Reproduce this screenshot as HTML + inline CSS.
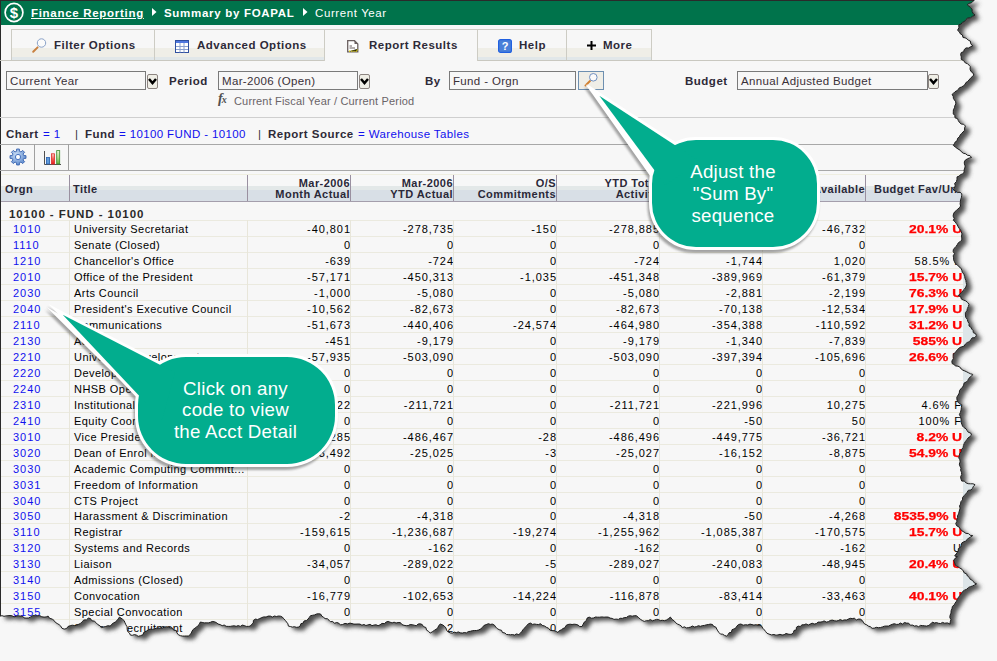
<!DOCTYPE html>
<html><head><meta charset="utf-8">
<style>
html,body{margin:0;padding:0;}
body{width:997px;height:661px;overflow:hidden;background:#f7f7f7;position:relative;font-family:"Liberation Sans",sans-serif;font-size:11px;color:#000;}
.abs{position:absolute;}
#paper{position:absolute;left:0;top:0;width:997px;height:661px;background:#f7f7f7;overflow:hidden;}
.t{position:absolute;white-space:nowrap;line-height:13px;}
.hdr{position:absolute;left:0;top:0;width:997px;height:25px;background:#00734b;border-top:1px solid #2a2a2a;box-sizing:border-box;}
.hl{color:#fff;font-weight:bold;font-size:11.5px;letter-spacing:0.7px;}
.tab{position:absolute;top:29px;height:31px;box-sizing:border-box;border:1px solid #cdccc4;border-bottom:none;background:linear-gradient(#f7f7f7 0,#f7f7f7 18px,#efeee7 18px,#efeee7 27px,#e1e7e9 27px);}
.tab .t{top:9px;color:#2e2a38;font-weight:bold;font-size:11.5px;letter-spacing:0.5px;}
.sel{position:absolute;top:71px;height:19px;box-sizing:border-box;border:1px solid #7a7a7a;background:#f7f7f7;}
.sel .t{left:3px;top:3px;color:#3a3038;font-size:11.5px;letter-spacing:0.35px;}
.dd{position:absolute;top:74px;width:11px;height:15px;box-sizing:border-box;border:1px solid #8c8480;border-radius:2px;background:#efeee6;}
.lbl{position:absolute;top:75px;font-weight:bold;color:#2e2a38;font-size:11.5px;white-space:nowrap;line-height:13px;letter-spacing:0.5px;}
.hline{position:absolute;left:0;height:1px;background:#c8c8c8;}
.cr{position:absolute;white-space:nowrap;line-height:16px;height:16px;letter-spacing:0.55px;}
.num{letter-spacing:0.95px;}
.num{text-align:right;}
.lnk{color:#1010ee;}
.num.red{color:#ff0000;font-weight:bold;letter-spacing:0;transform:scaleX(1.26);transform-origin:100% 50%;-webkit-text-stroke:0.25px #ff0000;}
.th{position:absolute;white-space:nowrap;line-height:12px;font-weight:bold;color:#2a2838;text-align:right;letter-spacing:0.45px;}
.callout text{font-family:"Liberation Sans",sans-serif;}
</style></head><body>

<svg class="abs" style="left:0;top:0" width="997" height="661"><defs><filter id="sh" x="-5%" y="-5%" width="110%" height="110%"><feGaussianBlur stdDeviation="2.1"/></filter></defs>
<polygon points="5.0,3.5 979.5,3.5 977.8,5.0 976.2,6.4 973.9,6.9 972.2,8.3 975.3,10.8 977.0,12.7 977.2,15.2 978.3,17.4 980.0,18.5 977.7,19.7 975.5,21.2 972.8,21.5 971.0,22.8 969.7,24.9 967.5,25.7 966.1,27.6 963.8,28.3 963.9,31.2 962.6,33.8 964.3,35.3 965.4,37.4 967.4,38.5 968.0,41.0 970.1,41.3 971.9,42.3 973.4,43.8 975.3,44.5 975.8,47.3 977.7,49.5 975.5,50.3 973.5,51.5 971.0,51.4 969.2,53.1 968.7,55.2 966.3,56.0 965.6,58.0 966.3,60.4 966.2,62.8 968.7,64.2 970.4,66.5 972.4,67.1 973.9,68.6 975.3,70.1 975.0,72.6 975.9,74.9 977.8,76.3 978.9,78.5 977.2,80.1 975.5,81.7 974.0,83.5 972.6,85.0 970.9,86.1 969.9,88.1 968.3,89.4 966.6,90.5 964.5,91.2 963.3,92.8 961.9,94.3 960.0,95.2 958.6,96.7 957.0,98.0 958.2,99.7 958.4,101.9 959.5,103.6 960.7,105.3 960.8,107.4 959.8,109.3 959.5,111.3 958.4,113.2 958.3,115.3 958.3,117.4 959.8,118.9 960.0,121.3 962.5,122.1 963.3,124.1 964.4,125.9 966.2,127.5 968.7,127.8 970.4,129.5 969.6,131.5 969.6,133.8 968.0,135.5 966.5,137.0 965.2,138.6 964.3,140.4 962.6,141.8 962.2,144.1 960.4,145.3 959.4,147.1 958.3,148.9 960.6,150.8 963.0,152.5 965.0,153.6 966.5,155.4 968.4,156.8 970.7,157.3 972.5,158.8 975.0,159.1 976.5,161.0 974.3,161.5 972.3,162.4 970.4,163.5 969.3,165.4 969.4,167.4 970.2,169.5 969.8,171.5 969.1,173.5 969.2,175.5 967.9,177.4 965.6,178.0 964.1,179.7 962.0,180.4 962.0,182.8 961.5,185.0 959.7,186.8 960.2,189.3 959.4,191.4 958.3,193.5 960.5,194.3 962.3,196.0 965.0,195.7 966.8,197.3 966.7,199.3 966.3,201.4 965.5,203.3 965.4,205.4 965.1,207.4 965.6,209.5 964.4,211.3 962.7,212.6 961.2,214.2 959.5,215.5 958.5,217.5 958.1,219.6 959.2,221.9 958.3,223.9 960.0,225.1 961.1,226.8 962.3,228.4 963.2,230.3 964.3,232.0 965.6,233.5 966.3,235.4 967.0,237.4 966.5,239.5 966.8,241.5 966.8,243.5 965.3,245.0 963.4,246.2 962.3,248.1 961.1,249.9 959.6,251.4 958.3,253.2 958.2,255.2 959.5,257.2 958.2,259.3 958.6,261.3 958.6,263.3 959.5,265.3 960.6,267.3 962.6,268.6 964.0,270.3 965.9,271.6 966.8,273.8 967.3,275.9 968.9,277.7 969.6,279.8 970.0,281.9 970.8,284.0 971.2,286.1 971.6,288.3 970.8,290.6 969.5,292.5 967.9,294.1 966.6,296.0 964.8,297.5 963.2,299.2 965.5,299.9 966.4,302.6 968.5,303.6 970.8,304.4 972.5,305.9 974.0,307.7 973.4,309.9 972.4,312.0 971.9,314.3 970.4,316.1 970.4,318.5 970.7,320.8 972.3,322.8 972.8,325.0 974.1,327.1 974.0,329.5 975.8,330.7 976.7,332.5 978.0,334.0 978.4,336.3 980.6,337.1 981.3,339.1 980.0,341.2 977.2,341.3 975.8,343.3 974.4,345.2 972.2,346.0 970.4,347.5 969.2,349.6 966.9,350.3 964.7,351.0 963.1,352.6 961.5,354.2 960.3,356.2 958.3,357.3 958.2,359.8 958.3,362.2 956.9,364.5 957.1,367.0 958.9,368.0 960.6,369.4 962.9,369.7 964.8,370.5 966.2,372.5 967.9,373.7 969.9,374.5 971.8,375.4 973.7,376.4 975.6,377.3 977.7,377.9 976.6,379.7 974.8,380.7 973.6,382.3 972.6,384.2 971.2,385.6 969.2,386.4 968.6,388.6 967.6,390.6 965.9,392.3 964.5,394.1 964.3,396.5 963.2,398.5 961.8,400.8 962.0,403.5 963.0,405.7 964.6,407.3 966.8,408.3 966.4,410.8 966.1,413.3 965.5,415.7 964.4,418.0 965.5,420.3 966.1,422.7 966.0,425.3 966.8,427.7 967.6,429.7 969.1,431.2 971.0,432.3 972.1,434.1 973.3,435.8 975.7,436.5 976.5,438.6 974.8,440.1 973.0,441.5 971.7,443.4 970.3,445.1 969.2,447.1 968.4,449.1 968.1,451.3 966.3,453.0 966.3,455.3 964.7,457.0 964.4,459.2 963.7,461.3 964.9,463.3 965.1,465.4 964.3,467.6 964.9,469.6 966.0,471.6 965.6,473.7 966.5,475.8 966.7,478.0 965.6,480.3 966.0,482.5 966.8,484.6 969.2,484.6 971.1,486.4 973.2,487.2 975.6,487.3 978.0,487.3 980.1,488.2 978.5,489.7 977.5,491.8 976.0,493.5 973.3,493.8 972.1,495.8 970.7,497.5 969.2,499.1 967.6,500.9 967.5,503.4 965.9,505.2 965.6,507.6 964.5,509.4 965.1,511.6 964.6,513.5 964.0,515.5 963.6,517.4 962.5,519.2 962.6,521.3 961.8,523.2 961.8,525.2 960.7,527.0 961.7,529.3 964.0,530.5 965.3,532.4 966.8,534.3 968.9,535.4 970.9,536.9 973.4,537.0 975.2,538.8 977.7,539.1 975.9,540.3 974.0,541.5 972.2,542.7 970.9,544.7 968.7,545.3 966.8,546.4 966.3,548.7 965.6,550.8 963.3,552.2 963.3,554.7 961.8,556.5 960.7,558.5 960.6,558.1 959.7,559.5 962.4,560.2 960.3,561.6 958.8,563.6 959.6,566.4 960.6,569.1 962.9,570.1 964.9,571.6 967.0,572.8 968.3,574.5 969.3,576.5 971.6,577.4 972.4,579.5 974.2,580.8 975.2,582.8 977.6,584.0 979.2,586.3 981.6,587.4 979.7,588.4 977.7,589.4 975.6,590.1 973.5,590.9 971.9,592.7 969.8,593.5 968.0,594.7 966.6,596.7 965.2,598.8 963.5,600.7 962.4,602.9 961.4,604.8 960.2,606.5 959.2,608.4 957.4,609.9 957.0,612.1 956.1,614.3 956.0,616.6 955.1,618.7 954.8,620.9 955.9,623.2 955.2,625.4 955.1,627.6 952.5,626.4 949.6,626.7 947.6,625.9 945.5,627.0 943.5,626.8 941.5,626.1 939.4,626.5 937.5,625.6 935.8,627.3 933.9,628.9 931.5,629.6 929.5,629.3 927.5,629.1 925.5,628.9 923.5,630.2 921.5,629.2 919.5,629.6 917.6,628.6 915.3,628.7 913.7,626.7 911.5,626.6 909.4,626.0 907.5,627.6 905.4,626.5 903.5,627.8 901.4,627.9 899.3,627.2 897.3,627.8 895.4,628.6 893.5,629.6 891.4,629.5 889.4,629.7 887.5,630.4 885.5,631.0 883.5,631.2 881.3,630.8 879.4,631.6 877.1,631.8 875.4,630.2 873.4,629.6 871.7,628.3 869.6,627.5 868.3,625.6 867.1,623.8 865.3,622.6 863.3,622.6 861.3,623.4 859.3,621.7 857.3,622.1 855.3,621.8 853.3,622.6 851.4,623.5 849.3,623.4 847.4,624.1 845.2,623.0 843.3,624.1 841.3,624.5 839.3,624.2 837.2,623.6 835.2,624.0 833.3,625.2 831.3,625.6 829.1,624.4 827.2,625.3 825.2,625.6 823.1,625.6 821.3,627.1 819.3,627.5 817.1,626.7 815.2,627.6 813.3,628.5 811.0,627.4 809.1,628.3 807.0,628.3 805.2,630.0 803.1,629.6 801.4,630.8 801.3,633.3 799.0,634.0 798.4,636.0 797.1,637.6 795.1,637.9 793.1,637.6 791.0,637.0 789.1,638.2 787.1,638.5 785.0,637.8 783.0,638.4 781.0,638.7 779.0,638.0 776.5,638.4 774.0,637.6 771.9,636.7 770.6,635.0 769.3,633.3 767.8,631.8 766.8,629.8 765.0,628.6 763.0,628.8 761.0,628.2 758.9,628.6 757.0,628.1 755.0,627.6 752.8,628.5 750.5,628.2 748.2,628.7 745.9,627.5 743.6,628.0 742.0,629.4 741.0,631.3 739.1,632.4 737.0,633.2 736.5,635.8 734.1,636.3 733.1,638.2 731.5,639.6 729.5,638.9 727.7,637.7 725.5,637.6 724.0,636.1 722.8,634.4 721.8,632.6 720.8,630.6 718.6,629.8 717.5,628.0 715.4,627.6 713.4,628.0 711.4,628.3 709.5,628.9 707.5,629.1 705.5,629.8 703.4,629.2 701.5,630.1 699.5,630.5 697.3,629.5 695.5,630.6 693.5,631.1 691.5,631.4 689.3,630.3 687.4,631.2 686.2,629.4 684.4,628.3 682.4,627.5 680.7,626.3 679.4,624.6 677.1,622.9 675.4,620.6 673.4,622.2 671.3,623.6 669.3,624.2 667.3,623.8 665.3,624.1 663.3,622.9 661.3,622.9 659.3,623.7 657.3,624.3 655.3,623.0 653.3,624.2 651.3,624.2 649.3,624.9 647.3,624.0 645.2,622.6 643.3,620.8 641.3,619.2 639.3,619.2 637.2,619.7 635.2,619.2 633.2,619.7 631.4,621.0 629.3,621.1 627.4,621.9 625.2,621.8 623.4,622.9 621.2,622.6 619.0,622.9 617.1,621.9 615.1,621.6 613.2,620.6 611.1,620.5 609.0,620.7 606.8,620.4 604.7,620.7 602.6,620.7 600.5,620.5 598.4,621.5 596.3,621.7 594.2,620.6 592.1,621.6 591.4,624.0 589.3,625.6 588.1,627.8 587.1,630.0 584.8,630.1 583.1,628.6 581.1,627.9 579.1,627.7 577.1,628.0 575.1,627.7 573.1,628.0 571.1,628.9 570.1,631.2 568.0,632.0 566.4,633.3 564.3,634.2 563.0,636.0 561.2,634.9 559.2,634.2 557.0,634.1 555.0,633.6 553.5,631.7 551.4,630.8 549.6,629.5 547.2,628.9 545.6,627.2 543.6,628.0 541.6,627.9 539.5,627.5 537.5,627.9 535.5,626.6 533.5,627.2 532.1,628.7 530.7,630.2 529.3,631.8 527.9,633.3 526.8,635.0 525.5,636.6 523.8,638.1 521.3,637.4 519.5,638.6 517.5,638.0 515.5,638.3 513.5,638.1 511.5,638.0 509.9,636.5 507.5,636.0 506.5,633.8 504.2,633.2 502.2,632.1 500.7,630.5 499.4,628.6 497.4,627.6 495.3,627.9 493.4,627.2 491.2,628.1 488.9,629.0 487.4,631.0 485.5,632.5 483.4,633.6 481.4,634.0 479.3,634.0 477.3,634.2 475.3,634.8 473.3,635.1 471.4,636.4 469.3,636.0 467.3,636.6 465.3,636.3 463.3,635.4 461.3,636.2 459.3,635.6 457.3,636.6 455.3,636.4 453.3,635.6 451.6,633.8 450.9,631.4 449.3,629.6 447.5,628.3 445.3,627.6 443.7,629.1 442.9,631.2 441.3,632.6 439.3,633.9 437.3,635.3 435.2,636.6 433.6,634.9 431.5,633.6 430.9,631.0 428.4,630.1 427.2,628.0 425.1,627.3 423.1,627.5 421.3,629.3 419.2,628.7 417.2,628.2 415.1,628.1 413.2,629.1 411.2,629.2 409.0,628.8 407.0,628.1 405.4,626.1 403.1,626.0 401.1,626.5 399.1,625.7 397.1,626.4 395.1,625.7 393.1,624.9 391.1,625.6 389.4,627.1 386.9,626.9 385.1,628.3 383.1,629.2 381.1,628.3 379.1,628.5 377.0,629.2 375.1,627.8 373.0,628.4 370.9,629.0 369.0,628.0 366.9,628.7 365.0,627.6 363.0,627.5 361.0,627.6 358.9,627.6 357.0,627.1 355.0,626.6 352.6,627.4 350.0,626.9 347.6,628.0 345.4,628.4 343.7,626.6 341.7,626.0 339.4,626.8 337.7,624.9 335.5,625.2 334.0,623.7 332.5,622.3 330.1,622.1 328.5,620.8 326.8,619.6 325.7,617.6 323.5,617.2 321.5,617.5 319.6,618.4 317.5,618.8 315.5,619.2 314.3,620.9 313.0,622.6 311.5,624.0 309.0,624.5 308.2,626.6 305.9,627.2 305.2,629.5 303.4,630.6 301.4,630.8 299.4,630.2 297.3,630.6 295.4,630.0 293.4,629.6 292.9,627.3 291.6,625.6 290.3,623.9 288.8,622.3 287.4,620.6 285.5,619.7 283.5,619.5 281.4,620.0 279.4,619.5 277.3,620.6 275.4,619.6 273.2,619.6 271.1,620.5 268.8,620.4 266.7,621.1 264.7,622.1 262.6,623.0 260.3,622.6 258.4,623.9 258.3,626.5 256.6,627.9 255.3,629.6 253.3,629.9 251.3,629.9 249.3,629.1 247.3,628.6 245.3,629.9 243.3,629.1 241.2,629.8 239.2,629.3 237.2,629.5 235.2,629.9 233.2,629.9 231.2,629.8 229.2,628.5 227.2,629.2 225.2,628.1 223.0,627.5 221.2,626.0 219.2,625.2 217.2,625.0 215.2,625.9 213.2,626.4 211.2,626.3 209.2,626.4 207.2,625.9 205.2,625.6 204.5,627.6 203.0,629.0 201.7,630.5 199.9,631.7 198.2,632.9 197.1,634.6 196.3,636.6 195.0,638.1 193.6,639.6 191.6,639.5 189.5,639.6 187.5,639.6 185.5,639.2 183.4,638.3 182.0,636.5 181.3,634.0 178.6,633.6 177.5,631.6 175.5,631.3 173.5,630.9 171.6,630.2 169.5,630.6 167.6,631.4 165.6,631.5 163.6,631.8 161.5,631.6 159.5,632.4 157.5,632.9 155.2,632.6 153.2,633.4 151.4,634.6 149.0,635.6 147.9,638.3 145.4,639.2 143.3,639.9 141.4,638.6 139.4,638.1 137.4,638.8 135.4,638.6 134.5,636.5 132.6,635.0 132.2,632.7 132.1,630.3 130.9,628.3 130.0,626.3 129.2,624.2 127.4,622.6 124.4,620.6 123.2,622.4 121.9,624.1 120.3,625.5 118.3,626.6 116.6,627.9 115.3,629.6 112.9,629.2 110.7,630.0 108.5,630.5 106.3,631.2 104.9,629.2 102.7,628.0 101.1,626.2 99.3,624.6 96.9,624.3 95.5,622.1 93.3,621.6 91.5,623.3 88.9,623.5 87.1,625.2 85.4,627.0 83.2,628.0 81.3,629.0 79.3,629.0 77.2,628.7 75.2,629.2 73.0,630.0 71.5,632.1 69.2,632.6 67.0,631.8 65.8,629.7 64.2,628.2 62.2,627.0 60.3,625.8 59.0,623.9 57.2,622.6 54.6,621.8 53.1,619.6 51.2,620.4 49.1,620.6 46.8,620.3 44.7,619.1 42.4,619.3 40.1,619.2 37.7,619.1 35.6,620.4 33.5,621.5 31.1,621.6 29.0,621.4 27.4,619.5 25.1,619.6 23.1,619.2 21.1,619.8 19.0,620.3 17.0,619.3 15.0,619.0 13.0,619.2 11.0,619.4 9.0,619.8 7.0,619.2 5.0,619.6" fill="#505050" filter="url(#sh)"/></svg>
<div id="paper" style="clip-path:polygon(0.0px 0.0px,974.5px 0.0px,972.8px 1.5px,971.2px 2.9px,968.9px 3.4px,967.2px 4.8px,970.3px 7.3px,972.0px 9.2px,972.2px 11.7px,973.3px 13.9px,975.0px 15.0px,972.7px 16.2px,970.5px 17.7px,967.8px 18.0px,966.0px 19.3px,964.7px 21.4px,962.5px 22.2px,961.1px 24.1px,958.8px 24.8px,958.9px 27.7px,957.6px 30.3px,959.3px 31.8px,960.4px 33.9px,962.4px 35.0px,963.0px 37.5px,965.1px 37.8px,966.9px 38.8px,968.4px 40.3px,970.3px 41.0px,970.8px 43.8px,972.7px 46.0px,970.5px 46.8px,968.5px 48.0px,966.0px 47.9px,964.2px 49.6px,963.7px 51.7px,961.3px 52.5px,960.6px 54.5px,961.3px 56.9px,961.2px 59.3px,963.7px 60.7px,965.4px 63.0px,967.4px 63.6px,968.9px 65.1px,970.3px 66.6px,970.0px 69.1px,970.9px 71.4px,972.8px 72.8px,973.9px 75.0px,972.2px 76.6px,970.5px 78.2px,969.0px 80.0px,967.6px 81.5px,965.9px 82.6px,964.9px 84.6px,963.3px 85.9px,961.6px 87.0px,959.5px 87.7px,958.3px 89.3px,956.9px 90.8px,955.0px 91.7px,953.6px 93.2px,952.0px 94.5px,953.2px 96.2px,953.4px 98.4px,954.5px 100.1px,955.7px 101.8px,955.8px 103.9px,954.8px 105.8px,954.5px 107.8px,953.4px 109.7px,953.3px 111.8px,953.3px 113.9px,954.8px 115.4px,955.0px 117.8px,957.5px 118.6px,958.3px 120.6px,959.4px 122.4px,961.2px 124.0px,963.7px 124.3px,965.4px 126.0px,964.6px 128.0px,964.6px 130.3px,963.0px 132.0px,961.5px 133.5px,960.2px 135.1px,959.3px 136.9px,957.6px 138.3px,957.2px 140.6px,955.4px 141.8px,954.4px 143.6px,953.3px 145.4px,955.6px 147.3px,958.0px 149.0px,960.0px 150.1px,961.5px 151.9px,963.4px 153.3px,965.7px 153.8px,967.5px 155.3px,970.0px 155.6px,971.5px 157.5px,969.3px 158.0px,967.3px 158.9px,965.4px 160.0px,964.3px 161.9px,964.4px 163.9px,965.2px 166.0px,964.8px 168.0px,964.1px 170.0px,964.2px 172.0px,962.9px 173.9px,960.6px 174.5px,959.1px 176.2px,957.0px 176.9px,957.0px 179.3px,956.5px 181.5px,954.7px 183.3px,955.2px 185.8px,954.4px 187.9px,953.3px 190.0px,955.5px 190.8px,957.3px 192.5px,960.0px 192.2px,961.8px 193.8px,961.7px 195.8px,961.3px 197.9px,960.5px 199.8px,960.4px 201.9px,960.1px 203.9px,960.6px 206.0px,959.4px 207.8px,957.7px 209.1px,956.2px 210.7px,954.5px 212.0px,953.5px 214.0px,953.1px 216.1px,954.2px 218.4px,953.3px 220.4px,955.0px 221.6px,956.1px 223.3px,957.3px 224.9px,958.2px 226.8px,959.3px 228.5px,960.6px 230.0px,961.3px 231.9px,962.0px 233.9px,961.5px 236.0px,961.8px 238.0px,961.8px 240.0px,960.3px 241.5px,958.4px 242.7px,957.3px 244.6px,956.1px 246.4px,954.6px 247.9px,953.3px 249.7px,953.2px 251.7px,954.5px 253.7px,953.2px 255.8px,953.6px 257.8px,953.6px 259.8px,954.5px 261.8px,955.6px 263.8px,957.6px 265.1px,959.0px 266.8px,960.9px 268.1px,961.8px 270.3px,962.3px 272.4px,963.9px 274.2px,964.6px 276.3px,965.0px 278.4px,965.8px 280.5px,966.2px 282.6px,966.6px 284.8px,965.8px 287.1px,964.5px 289.0px,962.9px 290.6px,961.6px 292.5px,959.8px 294.0px,958.2px 295.7px,960.5px 296.4px,961.4px 299.1px,963.5px 300.1px,965.8px 300.9px,967.5px 302.4px,969.0px 304.2px,968.4px 306.4px,967.4px 308.5px,966.9px 310.8px,965.4px 312.6px,965.4px 315.0px,965.7px 317.3px,967.3px 319.3px,967.8px 321.5px,969.1px 323.6px,969.0px 326.0px,970.8px 327.2px,971.7px 329.0px,973.0px 330.5px,973.4px 332.8px,975.6px 333.6px,976.3px 335.6px,975.0px 337.7px,972.2px 337.8px,970.8px 339.8px,969.4px 341.7px,967.2px 342.5px,965.4px 344.0px,964.2px 346.1px,961.9px 346.8px,959.7px 347.5px,958.1px 349.1px,956.5px 350.7px,955.3px 352.7px,953.3px 353.8px,953.2px 356.3px,953.3px 358.7px,951.9px 361.0px,952.1px 363.5px,953.9px 364.5px,955.6px 365.9px,957.9px 366.2px,959.8px 367.0px,961.2px 369.0px,962.9px 370.2px,964.9px 371.0px,966.8px 371.9px,968.7px 372.9px,970.6px 373.8px,972.7px 374.4px,971.6px 376.2px,969.8px 377.2px,968.6px 378.8px,967.6px 380.7px,966.2px 382.1px,964.2px 382.9px,963.6px 385.1px,962.6px 387.1px,960.9px 388.8px,959.5px 390.6px,959.3px 393.0px,958.2px 395.0px,956.8px 397.3px,957.0px 400.0px,958.0px 402.2px,959.6px 403.8px,961.8px 404.8px,961.4px 407.3px,961.1px 409.8px,960.5px 412.2px,959.4px 414.5px,960.5px 416.8px,961.1px 419.2px,961.0px 421.8px,961.8px 424.2px,962.6px 426.2px,964.1px 427.7px,966.0px 428.8px,967.1px 430.6px,968.3px 432.3px,970.7px 433.0px,971.5px 435.1px,969.8px 436.6px,968.0px 438.0px,966.7px 439.9px,965.3px 441.6px,964.2px 443.6px,963.4px 445.6px,963.1px 447.8px,961.3px 449.5px,961.3px 451.8px,959.7px 453.5px,959.4px 455.7px,958.7px 457.8px,959.9px 459.8px,960.1px 461.9px,959.3px 464.1px,959.9px 466.1px,961.0px 468.1px,960.6px 470.2px,961.5px 472.3px,961.7px 474.5px,960.6px 476.8px,961.0px 479.0px,961.8px 481.1px,964.2px 481.1px,966.1px 482.9px,968.2px 483.7px,970.6px 483.8px,973.0px 483.8px,975.1px 484.7px,973.5px 486.2px,972.5px 488.3px,971.0px 490.0px,968.3px 490.3px,967.1px 492.3px,965.7px 494.0px,964.2px 495.6px,962.6px 497.4px,962.5px 499.9px,960.9px 501.7px,960.6px 504.1px,959.5px 505.9px,960.1px 508.1px,959.6px 510.0px,959.0px 512.0px,958.6px 513.9px,957.5px 515.7px,957.6px 517.8px,956.8px 519.7px,956.8px 521.7px,955.7px 523.5px,956.7px 525.8px,959.0px 527.0px,960.3px 528.9px,961.8px 530.8px,963.9px 531.9px,965.9px 533.4px,968.4px 533.5px,970.2px 535.3px,972.7px 535.6px,970.9px 536.8px,969.0px 538.0px,967.2px 539.2px,965.9px 541.2px,963.7px 541.8px,961.8px 542.9px,961.3px 545.2px,960.6px 547.3px,958.3px 548.7px,958.3px 551.2px,956.8px 553.0px,955.7px 555.0px,955.6px 554.6px,954.7px 556.0px,957.4px 556.7px,955.3px 558.1px,953.8px 560.1px,954.6px 562.9px,955.6px 565.6px,957.9px 566.6px,959.9px 568.1px,962.0px 569.3px,963.3px 571.0px,964.3px 573.0px,966.6px 573.9px,967.4px 576.0px,969.2px 577.3px,970.2px 579.3px,972.6px 580.5px,974.2px 582.8px,976.6px 583.9px,974.7px 584.9px,972.7px 585.9px,970.6px 586.6px,968.5px 587.4px,966.9px 589.2px,964.8px 590.0px,963.0px 591.2px,961.6px 593.2px,960.2px 595.3px,958.5px 597.2px,957.4px 599.4px,956.4px 601.3px,955.2px 603.0px,954.2px 604.9px,952.4px 606.4px,952.0px 608.6px,951.1px 610.8px,951.0px 613.1px,950.1px 615.2px,949.8px 617.4px,950.9px 619.7px,950.2px 621.9px,950.1px 624.1px,947.5px 622.9px,944.6px 623.2px,942.6px 622.4px,940.5px 623.5px,938.5px 623.3px,936.5px 622.6px,934.4px 623.0px,932.5px 622.1px,930.8px 623.8px,928.9px 625.4px,926.5px 626.1px,924.5px 625.8px,922.5px 625.6px,920.5px 625.4px,918.5px 626.7px,916.5px 625.7px,914.5px 626.1px,912.6px 625.1px,910.3px 625.2px,908.7px 623.2px,906.5px 623.1px,904.4px 622.5px,902.5px 624.1px,900.4px 623.0px,898.5px 624.3px,896.4px 624.4px,894.3px 623.7px,892.3px 624.3px,890.4px 625.1px,888.5px 626.1px,886.4px 626.0px,884.4px 626.2px,882.5px 626.9px,880.5px 627.5px,878.5px 627.7px,876.3px 627.3px,874.4px 628.1px,872.1px 628.3px,870.4px 626.7px,868.4px 626.1px,866.7px 624.8px,864.6px 624.0px,863.3px 622.1px,862.1px 620.3px,860.3px 619.1px,858.3px 619.1px,856.3px 619.9px,854.3px 618.2px,852.3px 618.6px,850.3px 618.3px,848.3px 619.1px,846.4px 620.0px,844.3px 619.9px,842.4px 620.6px,840.2px 619.5px,838.3px 620.6px,836.3px 621.0px,834.3px 620.7px,832.2px 620.1px,830.2px 620.5px,828.3px 621.7px,826.3px 622.1px,824.1px 620.9px,822.2px 621.8px,820.2px 622.1px,818.1px 622.1px,816.3px 623.6px,814.3px 624.0px,812.1px 623.2px,810.2px 624.1px,808.3px 625.0px,806.0px 623.9px,804.1px 624.8px,802.0px 624.8px,800.2px 626.5px,798.1px 626.1px,796.4px 627.3px,796.3px 629.8px,794.0px 630.5px,793.4px 632.5px,792.1px 634.1px,790.1px 634.4px,788.1px 634.1px,786.0px 633.5px,784.1px 634.7px,782.1px 635.0px,780.0px 634.3px,778.0px 634.9px,776.0px 635.2px,774.0px 634.5px,771.5px 634.9px,769.0px 634.1px,766.9px 633.2px,765.6px 631.5px,764.3px 629.8px,762.8px 628.3px,761.8px 626.3px,760.0px 625.1px,758.0px 625.3px,756.0px 624.7px,753.9px 625.1px,752.0px 624.6px,750.0px 624.1px,747.8px 625.0px,745.5px 624.7px,743.2px 625.2px,740.9px 624.0px,738.6px 624.5px,737.0px 625.9px,736.0px 627.8px,734.1px 628.9px,732.0px 629.7px,731.5px 632.3px,729.1px 632.8px,728.1px 634.7px,726.5px 636.1px,724.5px 635.4px,722.7px 634.2px,720.5px 634.1px,719.0px 632.6px,717.8px 630.9px,716.8px 629.1px,715.8px 627.1px,713.6px 626.3px,712.5px 624.5px,710.4px 624.1px,708.4px 624.5px,706.4px 624.8px,704.5px 625.4px,702.5px 625.6px,700.5px 626.3px,698.4px 625.7px,696.5px 626.6px,694.5px 627.0px,692.3px 626.0px,690.5px 627.1px,688.5px 627.6px,686.5px 627.9px,684.3px 626.8px,682.4px 627.7px,681.2px 625.9px,679.4px 624.8px,677.4px 624.0px,675.7px 622.8px,674.4px 621.1px,672.1px 619.4px,670.4px 617.1px,668.4px 618.7px,666.3px 620.1px,664.3px 620.7px,662.3px 620.3px,660.3px 620.6px,658.3px 619.4px,656.3px 619.4px,654.3px 620.2px,652.3px 620.8px,650.3px 619.5px,648.3px 620.7px,646.3px 620.7px,644.3px 621.4px,642.3px 620.5px,640.2px 619.1px,638.3px 617.3px,636.3px 615.7px,634.3px 615.7px,632.2px 616.2px,630.2px 615.7px,628.2px 616.2px,626.4px 617.5px,624.3px 617.6px,622.4px 618.4px,620.2px 618.3px,618.4px 619.4px,616.2px 619.1px,614.0px 619.4px,612.1px 618.4px,610.1px 618.1px,608.2px 617.1px,606.1px 617.0px,604.0px 617.2px,601.8px 616.9px,599.7px 617.2px,597.6px 617.2px,595.5px 617.0px,593.4px 618.0px,591.3px 618.2px,589.2px 617.1px,587.1px 618.1px,586.4px 620.5px,584.3px 622.1px,583.1px 624.3px,582.1px 626.5px,579.8px 626.6px,578.1px 625.1px,576.1px 624.4px,574.1px 624.2px,572.1px 624.5px,570.1px 624.2px,568.1px 624.5px,566.1px 625.4px,565.1px 627.7px,563.0px 628.5px,561.4px 629.8px,559.3px 630.7px,558.0px 632.5px,556.2px 631.4px,554.2px 630.7px,552.0px 630.6px,550.0px 630.1px,548.5px 628.2px,546.4px 627.3px,544.6px 626.0px,542.2px 625.4px,540.6px 623.7px,538.6px 624.5px,536.6px 624.4px,534.5px 624.0px,532.5px 624.4px,530.5px 623.1px,528.5px 623.7px,527.1px 625.2px,525.7px 626.7px,524.3px 628.3px,522.9px 629.8px,521.8px 631.5px,520.5px 633.1px,518.8px 634.6px,516.3px 633.9px,514.5px 635.1px,512.5px 634.5px,510.5px 634.8px,508.5px 634.6px,506.5px 634.5px,504.9px 633.0px,502.5px 632.5px,501.5px 630.3px,499.2px 629.7px,497.2px 628.6px,495.7px 627.0px,494.4px 625.1px,492.4px 624.1px,490.3px 624.4px,488.4px 623.7px,486.2px 624.6px,483.9px 625.5px,482.4px 627.5px,480.5px 629.0px,478.4px 630.1px,476.4px 630.5px,474.3px 630.5px,472.3px 630.7px,470.3px 631.3px,468.3px 631.6px,466.4px 632.9px,464.3px 632.5px,462.3px 633.1px,460.3px 632.8px,458.3px 631.9px,456.3px 632.7px,454.3px 632.1px,452.3px 633.1px,450.3px 632.9px,448.3px 632.1px,446.6px 630.3px,445.9px 627.9px,444.3px 626.1px,442.5px 624.8px,440.3px 624.1px,438.7px 625.6px,437.9px 627.7px,436.3px 629.1px,434.3px 630.4px,432.3px 631.8px,430.2px 633.1px,428.6px 631.4px,426.5px 630.1px,425.9px 627.5px,423.4px 626.6px,422.2px 624.5px,420.1px 623.8px,418.1px 624.0px,416.3px 625.8px,414.2px 625.2px,412.2px 624.7px,410.1px 624.6px,408.2px 625.6px,406.2px 625.7px,404.0px 625.3px,402.0px 624.6px,400.4px 622.6px,398.1px 622.5px,396.1px 623.0px,394.1px 622.2px,392.1px 622.9px,390.1px 622.2px,388.1px 621.4px,386.1px 622.1px,384.4px 623.6px,381.9px 623.4px,380.1px 624.8px,378.1px 625.7px,376.1px 624.8px,374.1px 625.0px,372.0px 625.7px,370.1px 624.3px,368.0px 624.9px,365.9px 625.5px,364.0px 624.5px,361.9px 625.2px,360.0px 624.1px,358.0px 624.0px,356.0px 624.1px,353.9px 624.1px,352.0px 623.6px,350.0px 623.1px,347.6px 623.9px,345.0px 623.4px,342.6px 624.5px,340.4px 624.9px,338.7px 623.1px,336.7px 622.5px,334.4px 623.3px,332.7px 621.4px,330.5px 621.7px,329.0px 620.2px,327.5px 618.8px,325.1px 618.6px,323.5px 617.3px,321.8px 616.1px,320.7px 614.1px,318.5px 613.7px,316.5px 614.0px,314.6px 614.9px,312.5px 615.3px,310.5px 615.7px,309.3px 617.4px,308.0px 619.1px,306.5px 620.5px,304.0px 621.0px,303.2px 623.1px,300.9px 623.7px,300.2px 626.0px,298.4px 627.1px,296.4px 627.3px,294.4px 626.7px,292.3px 627.1px,290.4px 626.5px,288.4px 626.1px,287.9px 623.8px,286.6px 622.1px,285.3px 620.4px,283.8px 618.8px,282.4px 617.1px,280.5px 616.2px,278.5px 616.0px,276.4px 616.5px,274.4px 616.0px,272.3px 617.1px,270.4px 616.1px,268.2px 616.1px,266.1px 617.0px,263.8px 616.9px,261.7px 617.6px,259.7px 618.6px,257.6px 619.5px,255.3px 619.1px,253.4px 620.4px,253.3px 623.0px,251.6px 624.4px,250.3px 626.1px,248.3px 626.4px,246.3px 626.4px,244.3px 625.6px,242.3px 625.1px,240.3px 626.4px,238.3px 625.6px,236.2px 626.3px,234.2px 625.8px,232.2px 626.0px,230.2px 626.4px,228.2px 626.4px,226.2px 626.3px,224.2px 625.0px,222.2px 625.7px,220.2px 624.6px,218.0px 624.0px,216.2px 622.5px,214.2px 621.7px,212.2px 621.5px,210.2px 622.4px,208.2px 622.9px,206.2px 622.8px,204.2px 622.9px,202.2px 622.4px,200.2px 622.1px,199.5px 624.1px,198.0px 625.5px,196.7px 627.0px,194.9px 628.2px,193.2px 629.4px,192.1px 631.1px,191.3px 633.1px,190.0px 634.6px,188.6px 636.1px,186.6px 636.0px,184.5px 636.1px,182.5px 636.1px,180.5px 635.7px,178.4px 634.8px,177.0px 633.0px,176.3px 630.5px,173.6px 630.1px,172.5px 628.1px,170.5px 627.8px,168.5px 627.4px,166.6px 626.7px,164.5px 627.1px,162.6px 627.9px,160.6px 628.0px,158.6px 628.3px,156.5px 628.1px,154.5px 628.9px,152.5px 629.4px,150.2px 629.1px,148.2px 629.9px,146.4px 631.1px,144.0px 632.1px,142.9px 634.8px,140.4px 635.7px,138.3px 636.4px,136.4px 635.1px,134.4px 634.6px,132.4px 635.3px,130.4px 635.1px,129.5px 633.0px,127.6px 631.5px,127.2px 629.2px,127.1px 626.8px,125.9px 624.8px,125.0px 622.8px,124.2px 620.7px,122.4px 619.1px,119.4px 617.1px,118.2px 618.9px,116.9px 620.6px,115.3px 622.0px,113.3px 623.1px,111.6px 624.4px,110.3px 626.1px,107.9px 625.7px,105.7px 626.5px,103.5px 627.0px,101.3px 627.7px,99.9px 625.7px,97.7px 624.5px,96.1px 622.7px,94.3px 621.1px,91.9px 620.8px,90.5px 618.6px,88.3px 618.1px,86.5px 619.8px,83.9px 620.0px,82.1px 621.7px,80.4px 623.5px,78.2px 624.5px,76.3px 625.5px,74.3px 625.5px,72.2px 625.2px,70.2px 625.7px,68.0px 626.5px,66.5px 628.6px,64.2px 629.1px,62.0px 628.3px,60.8px 626.2px,59.2px 624.7px,57.2px 623.5px,55.3px 622.3px,54.0px 620.4px,52.2px 619.1px,49.6px 618.3px,48.1px 616.1px,46.2px 616.9px,44.1px 617.1px,41.8px 616.8px,39.7px 615.6px,37.4px 615.8px,35.1px 615.7px,32.7px 615.6px,30.6px 616.9px,28.5px 618.0px,26.1px 618.1px,24.0px 617.9px,22.4px 616.0px,20.1px 616.1px,18.1px 615.7px,16.1px 616.3px,14.0px 616.8px,12.0px 615.8px,10.0px 615.5px,8.0px 615.7px,6.0px 615.9px,4.0px 616.3px,2.0px 615.7px,0.0px 616.1px);">
<div class="hdr"></div>
<div class="abs" style="left:0;top:0;width:1px;height:661px;background:#2a2a2a"></div>
<svg class="abs" style="left:0;top:0" width="28" height="25" viewBox="0 0 28 25">
<ellipse cx="14" cy="12.5" rx="8.9" ry="9.1" fill="none" stroke="#fff" stroke-width="1.7"/>
<text x="14" y="17.6" text-anchor="middle" font-family="Liberation Sans" font-weight="bold" font-size="15" fill="#fff">$</text></svg>
<div class="t hl" style="left:31px;top:7px;text-decoration:underline;">Finance Reporting</div>
<svg class="abs" style="left:152px;top:8px" width="6" height="9"><path d="M0 0L4.5 4L0 8Z" fill="#fff"/></svg>
<div class="t hl" style="left:164px;top:7px;">Summary by FOAPAL</div>
<svg class="abs" style="left:303px;top:8px" width="6" height="9"><path d="M0 0L4.5 4L0 8Z" fill="#fff"/></svg>
<div class="t" style="left:315px;top:7px;color:#fff;font-size:11.5px;letter-spacing:0.6px;">Current Year</div>
<div class="hline" style="top:60px;width:997px;background:#c9c8c0"></div>
<div class="tab" style="left:11px;width:144px;"><div class="t" style="left:42px">Filter Options</div></div>
<div class="tab" style="left:154px;width:171px;"><div class="t" style="left:42px">Advanced Options</div></div>
<div class="tab" style="left:324px;width:154px;height:32px;background:#f7f7f7;"><div class="t" style="left:44px">Report Results</div></div>
<div class="tab" style="left:477px;width:90px;"><div class="t" style="left:41px">Help</div></div>
<div class="tab" style="left:566px;width:86px;"><div class="t" style="left:36px">More</div></div>
<svg class="abs" style="left:30px;top:37px" width="18" height="17" viewBox="0 0 18 17">
<line x1="3.2" y1="14.8" x2="7.6" y2="10.4" stroke="#c88040" stroke-width="2" stroke-linecap="round"/>
<circle cx="11.5" cy="6" r="4.2" fill="#fbfbfb" stroke="#8aa2c8" stroke-width="1"/></svg>
<svg class="abs" style="left:175px;top:40px" width="14" height="13" viewBox="0 0 14 13">
<rect x="0.5" y="0.5" width="13" height="12" fill="#fff" stroke="#3050a0"/>
<rect x="1" y="1" width="12" height="2" fill="#5078e0"/>
<path d="M1 6.5H13M1 9.5H13M5 3V12.5M9 3V12.5" stroke="#8aa0d0" stroke-width="1"/></svg>
<svg class="abs" style="left:347px;top:40px" width="12" height="13" viewBox="0 0 12 13">
<path d="M0.7 0.7H7.5L10.8 4V11.8H0.7Z" fill="#fff" stroke="#6a6060" stroke-width="1.3"/>
<path d="M7.5 0.7V4H10.8Z" fill="#6a6060"/>
<path d="M2.5 6H5M2.5 8H8" stroke="#6a6060" stroke-width="1"/>
<path d="M2 11.2H10.2V9" stroke="#f0e000" stroke-width="1.2" stroke-dasharray="1.2 1"/></svg>
<svg class="abs" style="left:498px;top:39px" width="14" height="14" viewBox="0 0 14 14">
<rect x="0.6" y="0.6" width="12.8" height="12.8" rx="2" fill="#4a80d8" stroke="#2060e0" stroke-width="1.2"/>
<text x="7" y="11.3" text-anchor="middle" font-family="Liberation Sans" font-weight="bold" font-size="11" fill="#fff">?</text></svg>
<svg class="abs" style="left:587px;top:41px" width="9" height="9"><path d="M4.5 0V9M0 4.5H9" stroke="#000" stroke-width="2"/></svg>
<div class="sel" style="left:6px;width:140px;"><div class="t">Current Year</div></div>
<div class="dd" style="left:147px;"></div>
<div class="lbl" style="left:169px;">Period</div>
<div class="sel" style="left:218px;width:140px;"><div class="t">Mar-2006 (Open)</div></div>
<div class="dd" style="left:359px;"></div>
<div class="t" style="left:234px;top:95px;color:#6a6468;font-size:11px;letter-spacing:0.17px;">Current Fiscal Year / Current Period</div>
<div class="t" style="left:218px;top:92px;font-family:'Liberation Serif';font-style:italic;font-weight:bold;font-size:14px;color:#505050;letter-spacing:-1px;">f<span style="font-size:10px">x</span></div>
<div class="lbl" style="left:425px;">By</div>
<div class="sel" style="left:449px;width:127px;"><div class="t">Fund - Orgn</div></div>
<div class="abs" style="left:578px;top:71px;width:26px;height:19px;box-sizing:border-box;border:1px solid #6d8fb0;background:#efeee7;"></div>
<svg class="abs" style="left:583px;top:72px" width="16" height="16" viewBox="0 0 16 16">
<line x1="2.5" y1="13.5" x2="7" y2="9" stroke="#d08030" stroke-width="2" stroke-linecap="round"/>
<circle cx="10.3" cy="5.3" r="3.8" fill="#fafafa" stroke="#7090c0" stroke-width="1"/></svg>
<div class="lbl" style="left:685px;">Budget</div>
<div class="sel" style="left:737px;width:191px;"><div class="t">Annual Adjusted Budget</div></div>
<div class="dd" style="left:928px;"></div>
<svg class="abs" style="left:148px;top:77px" width="10" height="9"><path d="M1 2L4.5 6L8 2" fill="none" stroke="#000" stroke-width="2.5"/></svg>
<svg class="abs" style="left:360px;top:77px" width="10" height="9"><path d="M1 2L4.5 6L8 2" fill="none" stroke="#000" stroke-width="2.5"/></svg>
<svg class="abs" style="left:929px;top:77px" width="10" height="9"><path d="M1 2L4.5 6L8 2" fill="none" stroke="#000" stroke-width="2.5"/></svg>
<div class="hline" style="top:117px;width:997px;background:#cfcfcf"></div>
<div class="t" style="left:6px;top:128px;font-size:11.5px;font-weight:bold;color:#2e2a38;letter-spacing:0.5px;">Chart</div>
<div class="t" style="left:43px;top:128px;font-size:11.5px;color:#1010ee;letter-spacing:0.38px;">= 1</div>
<div class="t" style="left:75px;top:128px;font-size:11.5px;color:#333;">|</div>
<div class="t" style="left:85px;top:128px;font-size:11.5px;font-weight:bold;color:#2e2a38;letter-spacing:0.5px;">Fund</div>
<div class="t" style="left:119px;top:128px;font-size:11.5px;color:#1010ee;letter-spacing:0.38px;">= 10100 FUND - 10100</div>
<div class="t" style="left:258px;top:128px;font-size:11.5px;color:#333;">|</div>
<div class="t" style="left:268px;top:128px;font-size:11.5px;font-weight:bold;color:#2e2a38;letter-spacing:0.5px;">Report Source</div>
<div class="t" style="left:358px;top:128px;font-size:11.5px;color:#1010ee;letter-spacing:0.38px;">= Warehouse Tables</div>
<div class="hline" style="top:144px;width:997px;background:#a8a8a8"></div>
<div class="abs" style="left:34px;top:144px;width:1px;height:26px;background:#a0a0a0"></div>
<div class="abs" style="left:68px;top:144px;width:1px;height:26px;background:#a0a0a0"></div>
<svg class="abs" style="left:8px;top:147px" width="20" height="20" viewBox="0 0 20 20">
<defs><radialGradient id="gg" cx="0.4" cy="0.35" r="0.7"><stop offset="0" stop-color="#c8dcf4"/><stop offset="1" stop-color="#5a88cc"/></radialGradient></defs>
<polygon points="15.72,8.54 17.98,8.63 17.98,11.37 15.72,11.46 15.07,13.01 16.61,14.68 14.68,16.61 13.01,15.07 11.46,15.72 11.37,17.98 8.63,17.98 8.54,15.72 6.99,15.07 5.32,16.61 3.39,14.68 4.93,13.01 4.28,11.46 2.02,11.37 2.02,8.63 4.28,8.54 4.93,6.99 3.39,5.32 5.32,3.39 6.99,4.93 8.54,4.28 8.63,2.02 11.37,2.02 11.46,4.28 13.01,4.93 14.68,3.39 16.61,5.32 15.07,6.99" fill="url(#gg)" stroke="#3a64b0" stroke-width="0.9" stroke-linejoin="round"/>
<circle cx="10" cy="10" r="2.6" fill="none" stroke="#4a74c0" stroke-width="1"/><circle cx="10" cy="10" r="1.9" fill="#fff"/></svg>
<svg class="abs" style="left:43px;top:150px" width="19" height="16" viewBox="0 0 19 16">
<defs><linearGradient id="gb" x1="0" x2="1"><stop offset="0" stop-color="#2a70c0"/><stop offset="0.5" stop-color="#7ab0e8"/><stop offset="1" stop-color="#2a70c0"/></linearGradient>
<linearGradient id="gr" x1="0" x2="0" y1="0" y2="1"><stop offset="0" stop-color="#f8d0c0"/><stop offset="0.5" stop-color="#f06050"/><stop offset="1" stop-color="#e02020"/></linearGradient>
<linearGradient id="gn" x1="0" x2="0" y1="0" y2="1"><stop offset="0" stop-color="#e8f4d8"/><stop offset="0.5" stop-color="#b0e090"/><stop offset="1" stop-color="#60b040"/></linearGradient></defs>
<path d="M1.5 1V14.5H18" fill="none" stroke="#505050" stroke-width="1"/>
<rect x="3.5" y="7.5" width="3" height="6.5" fill="url(#gb)" stroke="#2860b0" stroke-width="0.8"/>
<rect x="8.5" y="3.8" width="3" height="10.2" fill="url(#gr)" stroke="#e02828" stroke-width="0.8"/>
<rect x="13.7" y="0.6" width="3" height="13.4" fill="url(#gn)" stroke="#3a8a2a" stroke-width="0.8"/></svg>
<div class="hline" style="top:170px;width:997px;background:#a8a8a8"></div>
<div class="abs" style="left:1px;top:174px;width:996px;height:1px;background:#efeee0"></div>
<div class="abs" style="left:1px;top:186px;width:996px;height:15px;background:linear-gradient(#e3e8e8 0,#e3e8e8 4px,#d8dfe6 4px)"></div>
<div class="abs" style="left:1px;top:201px;width:996px;height:1px;background:#a49eac"></div>
<div class="abs" style="left:69px;top:175px;width:1px;height:26px;background:#9a90a0"></div>
<div class="abs" style="left:247px;top:175px;width:1px;height:26px;background:#9a90a0"></div>
<div class="abs" style="left:350px;top:175px;width:1px;height:26px;background:#9a90a0"></div>
<div class="abs" style="left:453px;top:175px;width:1px;height:26px;background:#9a90a0"></div>
<div class="abs" style="left:556px;top:175px;width:1px;height:26px;background:#9a90a0"></div>
<div class="abs" style="left:659px;top:175px;width:1px;height:26px;background:#9a90a0"></div>
<div class="abs" style="left:762px;top:175px;width:1px;height:26px;background:#9a90a0"></div>
<div class="abs" style="left:865px;top:175px;width:1px;height:26px;background:#9a90a0"></div>
<div class="th" style="left:5px;top:183px;text-align:left">Orgn</div>
<div class="th" style="left:73px;top:183px;text-align:left">Title</div>
<div class="th" style="right:647px;top:177px">Mar-2006</div>
<div class="th" style="right:647px;top:188px">Month Actual</div>
<div class="th" style="right:544px;top:177px">Mar-2006</div>
<div class="th" style="right:544px;top:188px">YTD Actual</div>
<div class="th" style="right:441px;top:177px">O/S</div>
<div class="th" style="right:441px;top:188px">Commitments</div>
<div class="th" style="right:338px;top:177px">YTD Total</div>
<div class="th" style="right:338px;top:188px">Activity</div>
<div class="th" style="right:235px;top:183px">Budget</div>
<div class="th" style="right:132px;top:183px">Available</div>
<div class="th" style="left:874px;top:183px;text-align:left">Budget Fav/Unfav</div>
<div class="t" style="left:9px;top:208px;font-weight:bold;font-size:11.5px;color:#2a2a2a;letter-spacing:0.95px;">10100 - FUND - 10100</div>
<div class="abs" style="left:1px;top:220px;width:996px;height:1px;background:#ebeadf"></div>
<div class="abs" style="left:1px;top:236px;width:996px;height:1px;background:#ebeadf"></div>
<div class="cr lnk" style="letter-spacing:0.95px;left:13px;top:221px">1010</div>
<div class="cr" style="letter-spacing:0.45px;left:74px;top:221px">University Secretariat</div>
<div class="cr num" style="right:646px;top:221px">-40,801</div>
<div class="cr num" style="right:543px;top:221px">-278,735</div>
<div class="cr num" style="right:440px;top:221px">-150</div>
<div class="cr num" style="right:337px;top:221px">-278,885</div>
<div class="cr num" style="right:234px;top:221px">-232,153</div>
<div class="cr num" style="right:131px;top:221px">-46,732</div>
<div class="cr num red" style="right:35px;top:221px">20.1% U</div>
<div class="abs" style="left:1px;top:252px;width:996px;height:1px;background:#ebeadf"></div>
<div class="cr lnk" style="letter-spacing:0.95px;left:13px;top:237px">1110</div>
<div class="cr" style="letter-spacing:0.45px;left:74px;top:237px">Senate (Closed)</div>
<div class="cr num" style="right:646px;top:237px">0</div>
<div class="cr num" style="right:543px;top:237px">0</div>
<div class="cr num" style="right:440px;top:237px">0</div>
<div class="cr num" style="right:337px;top:237px">0</div>
<div class="cr num" style="right:234px;top:237px">0</div>
<div class="cr num" style="right:131px;top:237px">0</div>
<div class="abs" style="left:1px;top:268px;width:996px;height:1px;background:#ebeadf"></div>
<div class="cr lnk" style="letter-spacing:0.95px;left:13px;top:253px">1210</div>
<div class="cr" style="letter-spacing:0.45px;left:74px;top:253px">Chancellor's Office</div>
<div class="cr num" style="right:646px;top:253px">-639</div>
<div class="cr num" style="right:543px;top:253px">-724</div>
<div class="cr num" style="right:440px;top:253px">0</div>
<div class="cr num" style="right:337px;top:253px">-724</div>
<div class="cr num" style="right:234px;top:253px">-1,744</div>
<div class="cr num" style="right:131px;top:253px">1,020</div>
<div class="cr num" style="right:35px;top:253px">58.5% F</div>
<div class="abs" style="left:1px;top:284px;width:996px;height:1px;background:#ebeadf"></div>
<div class="cr lnk" style="letter-spacing:0.95px;left:13px;top:269px">2010</div>
<div class="cr" style="letter-spacing:0.45px;left:74px;top:269px">Office of the President</div>
<div class="cr num" style="right:646px;top:269px">-57,171</div>
<div class="cr num" style="right:543px;top:269px">-450,313</div>
<div class="cr num" style="right:440px;top:269px">-1,035</div>
<div class="cr num" style="right:337px;top:269px">-451,348</div>
<div class="cr num" style="right:234px;top:269px">-389,969</div>
<div class="cr num" style="right:131px;top:269px">-61,379</div>
<div class="cr num red" style="right:35px;top:269px">15.7% U</div>
<div class="abs" style="left:1px;top:300px;width:996px;height:1px;background:#ebeadf"></div>
<div class="cr lnk" style="letter-spacing:0.95px;left:13px;top:285px">2030</div>
<div class="cr" style="letter-spacing:0.45px;left:74px;top:285px">Arts Council</div>
<div class="cr num" style="right:646px;top:285px">-1,000</div>
<div class="cr num" style="right:543px;top:285px">-5,080</div>
<div class="cr num" style="right:440px;top:285px">0</div>
<div class="cr num" style="right:337px;top:285px">-5,080</div>
<div class="cr num" style="right:234px;top:285px">-2,881</div>
<div class="cr num" style="right:131px;top:285px">-2,199</div>
<div class="cr num red" style="right:35px;top:285px">76.3% U</div>
<div class="abs" style="left:1px;top:316px;width:996px;height:1px;background:#ebeadf"></div>
<div class="cr lnk" style="letter-spacing:0.95px;left:13px;top:301px">2040</div>
<div class="cr" style="letter-spacing:0.45px;left:74px;top:301px">President's Executive Council</div>
<div class="cr num" style="right:646px;top:301px">-10,562</div>
<div class="cr num" style="right:543px;top:301px">-82,673</div>
<div class="cr num" style="right:440px;top:301px">0</div>
<div class="cr num" style="right:337px;top:301px">-82,673</div>
<div class="cr num" style="right:234px;top:301px">-70,138</div>
<div class="cr num" style="right:131px;top:301px">-12,534</div>
<div class="cr num red" style="right:35px;top:301px">17.9% U</div>
<div class="abs" style="left:1px;top:332px;width:996px;height:1px;background:#ebeadf"></div>
<div class="cr lnk" style="letter-spacing:0.95px;left:13px;top:317px">2110</div>
<div class="cr" style="letter-spacing:0.45px;left:74px;top:317px">Communications</div>
<div class="cr num" style="right:646px;top:317px">-51,673</div>
<div class="cr num" style="right:543px;top:317px">-440,406</div>
<div class="cr num" style="right:440px;top:317px">-24,574</div>
<div class="cr num" style="right:337px;top:317px">-464,980</div>
<div class="cr num" style="right:234px;top:317px">-354,388</div>
<div class="cr num" style="right:131px;top:317px">-110,592</div>
<div class="cr num red" style="right:35px;top:317px">31.2% U</div>
<div class="abs" style="left:1px;top:348px;width:996px;height:1px;background:#ebeadf"></div>
<div class="cr lnk" style="letter-spacing:0.95px;left:13px;top:333px">2130</div>
<div class="cr" style="letter-spacing:0.45px;left:74px;top:333px">Audit</div>
<div class="cr num" style="right:646px;top:333px">-451</div>
<div class="cr num" style="right:543px;top:333px">-9,179</div>
<div class="cr num" style="right:440px;top:333px">0</div>
<div class="cr num" style="right:337px;top:333px">-9,179</div>
<div class="cr num" style="right:234px;top:333px">-1,340</div>
<div class="cr num" style="right:131px;top:333px">-7,839</div>
<div class="cr num red" style="right:35px;top:333px">585% U</div>
<div class="abs" style="left:1px;top:364px;width:996px;height:1px;background:#ebeadf"></div>
<div class="cr lnk" style="letter-spacing:0.95px;left:13px;top:349px">2210</div>
<div class="cr" style="letter-spacing:0.45px;left:74px;top:349px">University Development</div>
<div class="cr num" style="right:646px;top:349px">-57,935</div>
<div class="cr num" style="right:543px;top:349px">-503,090</div>
<div class="cr num" style="right:440px;top:349px">0</div>
<div class="cr num" style="right:337px;top:349px">-503,090</div>
<div class="cr num" style="right:234px;top:349px">-397,394</div>
<div class="cr num" style="right:131px;top:349px">-105,696</div>
<div class="cr num red" style="right:35px;top:349px">26.6% U</div>
<div class="abs" style="left:1px;top:380px;width:996px;height:1px;background:#ebeadf"></div>
<div class="cr lnk" style="letter-spacing:0.95px;left:13px;top:365px">2220</div>
<div class="cr" style="letter-spacing:0.45px;left:74px;top:365px">Development Office</div>
<div class="cr num" style="right:646px;top:365px">0</div>
<div class="cr num" style="right:543px;top:365px">0</div>
<div class="cr num" style="right:440px;top:365px">0</div>
<div class="cr num" style="right:337px;top:365px">0</div>
<div class="cr num" style="right:234px;top:365px">0</div>
<div class="cr num" style="right:131px;top:365px">0</div>
<div class="abs" style="left:1px;top:396px;width:996px;height:1px;background:#ebeadf"></div>
<div class="cr lnk" style="letter-spacing:0.95px;left:13px;top:381px">2240</div>
<div class="cr" style="letter-spacing:0.45px;left:74px;top:381px">NHSB Operations</div>
<div class="cr num" style="right:646px;top:381px">0</div>
<div class="cr num" style="right:543px;top:381px">0</div>
<div class="cr num" style="right:440px;top:381px">0</div>
<div class="cr num" style="right:337px;top:381px">0</div>
<div class="cr num" style="right:234px;top:381px">0</div>
<div class="cr num" style="right:131px;top:381px">0</div>
<div class="abs" style="left:1px;top:412px;width:996px;height:1px;background:#ebeadf"></div>
<div class="cr lnk" style="letter-spacing:0.95px;left:13px;top:397px">2310</div>
<div class="cr" style="letter-spacing:0.45px;left:74px;top:397px">Institutional Research</div>
<div class="cr num" style="right:646px;top:397px">-24,022</div>
<div class="cr num" style="right:543px;top:397px">-211,721</div>
<div class="cr num" style="right:440px;top:397px">0</div>
<div class="cr num" style="right:337px;top:397px">-211,721</div>
<div class="cr num" style="right:234px;top:397px">-221,996</div>
<div class="cr num" style="right:131px;top:397px">10,275</div>
<div class="cr num" style="right:35px;top:397px">4.6% F</div>
<div class="abs" style="left:1px;top:428px;width:996px;height:1px;background:#ebeadf"></div>
<div class="cr lnk" style="letter-spacing:0.95px;left:13px;top:413px">2410</div>
<div class="cr" style="letter-spacing:0.45px;left:74px;top:413px">Equity Coordinator</div>
<div class="cr num" style="right:646px;top:413px">0</div>
<div class="cr num" style="right:543px;top:413px">0</div>
<div class="cr num" style="right:440px;top:413px">0</div>
<div class="cr num" style="right:337px;top:413px">0</div>
<div class="cr num" style="right:234px;top:413px">-50</div>
<div class="cr num" style="right:131px;top:413px">50</div>
<div class="cr num" style="right:35px;top:413px">100% F</div>
<div class="abs" style="left:1px;top:444px;width:996px;height:1px;background:#ebeadf"></div>
<div class="cr lnk" style="letter-spacing:0.95px;left:13px;top:429px">3010</div>
<div class="cr" style="letter-spacing:0.45px;left:74px;top:429px">Vice President Academic</div>
<div class="cr num" style="right:646px;top:429px">-51,285</div>
<div class="cr num" style="right:543px;top:429px">-486,467</div>
<div class="cr num" style="right:440px;top:429px">-28</div>
<div class="cr num" style="right:337px;top:429px">-486,496</div>
<div class="cr num" style="right:234px;top:429px">-449,775</div>
<div class="cr num" style="right:131px;top:429px">-36,721</div>
<div class="cr num red" style="right:35px;top:429px">8.2% U</div>
<div class="abs" style="left:1px;top:460px;width:996px;height:1px;background:#ebeadf"></div>
<div class="cr lnk" style="letter-spacing:0.95px;left:13px;top:445px">3020</div>
<div class="cr" style="letter-spacing:0.45px;left:74px;top:445px">Dean of Enrol Mgmt</div>
<div class="cr num" style="right:646px;top:445px">-3,492</div>
<div class="cr num" style="right:543px;top:445px">-25,025</div>
<div class="cr num" style="right:440px;top:445px">-3</div>
<div class="cr num" style="right:337px;top:445px">-25,027</div>
<div class="cr num" style="right:234px;top:445px">-16,152</div>
<div class="cr num" style="right:131px;top:445px">-8,875</div>
<div class="cr num red" style="right:35px;top:445px">54.9% U</div>
<div class="abs" style="left:1px;top:476px;width:996px;height:1px;background:#ebeadf"></div>
<div class="cr lnk" style="letter-spacing:0.95px;left:13px;top:461px">3030</div>
<div class="cr" style="letter-spacing:0.45px;left:74px;top:461px">Academic Computing Committ...</div>
<div class="cr num" style="right:646px;top:461px">0</div>
<div class="cr num" style="right:543px;top:461px">0</div>
<div class="cr num" style="right:440px;top:461px">0</div>
<div class="cr num" style="right:337px;top:461px">0</div>
<div class="cr num" style="right:234px;top:461px">0</div>
<div class="cr num" style="right:131px;top:461px">0</div>
<div class="abs" style="left:1px;top:492px;width:996px;height:1px;background:#ebeadf"></div>
<div class="cr lnk" style="letter-spacing:0.95px;left:13px;top:477px">3031</div>
<div class="cr" style="letter-spacing:0.45px;left:74px;top:477px">Freedom of Information</div>
<div class="cr num" style="right:646px;top:477px">0</div>
<div class="cr num" style="right:543px;top:477px">0</div>
<div class="cr num" style="right:440px;top:477px">0</div>
<div class="cr num" style="right:337px;top:477px">0</div>
<div class="cr num" style="right:234px;top:477px">0</div>
<div class="cr num" style="right:131px;top:477px">0</div>
<div class="abs" style="left:1px;top:508px;width:996px;height:1px;background:#ebeadf"></div>
<div class="cr lnk" style="letter-spacing:0.95px;left:13px;top:493px">3040</div>
<div class="cr" style="letter-spacing:0.45px;left:74px;top:493px">CTS Project</div>
<div class="cr num" style="right:646px;top:493px">0</div>
<div class="cr num" style="right:543px;top:493px">0</div>
<div class="cr num" style="right:440px;top:493px">0</div>
<div class="cr num" style="right:337px;top:493px">0</div>
<div class="cr num" style="right:234px;top:493px">0</div>
<div class="cr num" style="right:131px;top:493px">0</div>
<div class="abs" style="left:1px;top:523px;width:996px;height:1px;background:#ebeadf"></div>
<div class="cr lnk" style="letter-spacing:0.95px;left:13px;top:508px">3050</div>
<div class="cr" style="letter-spacing:0.45px;left:74px;top:508px">Harassment &amp; Discrimination</div>
<div class="cr num" style="right:646px;top:508px">-2</div>
<div class="cr num" style="right:543px;top:508px">-4,318</div>
<div class="cr num" style="right:440px;top:508px">0</div>
<div class="cr num" style="right:337px;top:508px">-4,318</div>
<div class="cr num" style="right:234px;top:508px">-50</div>
<div class="cr num" style="right:131px;top:508px">-4,268</div>
<div class="cr num red" style="right:35px;top:508px">8535.9% U</div>
<div class="abs" style="left:1px;top:539px;width:996px;height:1px;background:#ebeadf"></div>
<div class="cr lnk" style="letter-spacing:0.95px;left:13px;top:524px">3110</div>
<div class="cr" style="letter-spacing:0.45px;left:74px;top:524px">Registrar</div>
<div class="cr num" style="right:646px;top:524px">-159,615</div>
<div class="cr num" style="right:543px;top:524px">-1,236,687</div>
<div class="cr num" style="right:440px;top:524px">-19,274</div>
<div class="cr num" style="right:337px;top:524px">-1,255,962</div>
<div class="cr num" style="right:234px;top:524px">-1,085,387</div>
<div class="cr num" style="right:131px;top:524px">-170,575</div>
<div class="cr num red" style="right:35px;top:524px">15.7% U</div>
<div class="abs" style="left:1px;top:555px;width:996px;height:1px;background:#ebeadf"></div>
<div class="cr lnk" style="letter-spacing:0.95px;left:13px;top:540px">3120</div>
<div class="cr" style="letter-spacing:0.45px;left:74px;top:540px">Systems and Records</div>
<div class="cr num" style="right:646px;top:540px">0</div>
<div class="cr num" style="right:543px;top:540px">-162</div>
<div class="cr num" style="right:440px;top:540px">0</div>
<div class="cr num" style="right:337px;top:540px">-162</div>
<div class="cr num" style="right:234px;top:540px">0</div>
<div class="cr num" style="right:131px;top:540px">-162</div>
<div class="cr num" style="right:35px;top:540px">U</div>
<div class="abs" style="left:1px;top:571px;width:996px;height:1px;background:#ebeadf"></div>
<div class="cr lnk" style="letter-spacing:0.95px;left:13px;top:556px">3130</div>
<div class="cr" style="letter-spacing:0.45px;left:74px;top:556px">Liaison</div>
<div class="cr num" style="right:646px;top:556px">-34,057</div>
<div class="cr num" style="right:543px;top:556px">-289,022</div>
<div class="cr num" style="right:440px;top:556px">-5</div>
<div class="cr num" style="right:337px;top:556px">-289,027</div>
<div class="cr num" style="right:234px;top:556px">-240,083</div>
<div class="cr num" style="right:131px;top:556px">-48,945</div>
<div class="cr num red" style="right:35px;top:556px">20.4% U</div>
<div class="abs" style="left:1px;top:587px;width:996px;height:1px;background:#ebeadf"></div>
<div class="cr lnk" style="letter-spacing:0.95px;left:13px;top:572px">3140</div>
<div class="cr" style="letter-spacing:0.45px;left:74px;top:572px">Admissions (Closed)</div>
<div class="cr num" style="right:646px;top:572px">0</div>
<div class="cr num" style="right:543px;top:572px">0</div>
<div class="cr num" style="right:440px;top:572px">0</div>
<div class="cr num" style="right:337px;top:572px">0</div>
<div class="cr num" style="right:234px;top:572px">0</div>
<div class="cr num" style="right:131px;top:572px">0</div>
<div class="abs" style="left:1px;top:603px;width:996px;height:1px;background:#ebeadf"></div>
<div class="cr lnk" style="letter-spacing:0.95px;left:13px;top:588px">3150</div>
<div class="cr" style="letter-spacing:0.45px;left:74px;top:588px">Convocation</div>
<div class="cr num" style="right:646px;top:588px">-16,779</div>
<div class="cr num" style="right:543px;top:588px">-102,653</div>
<div class="cr num" style="right:440px;top:588px">-14,224</div>
<div class="cr num" style="right:337px;top:588px">-116,878</div>
<div class="cr num" style="right:234px;top:588px">-83,414</div>
<div class="cr num" style="right:131px;top:588px">-33,463</div>
<div class="cr num red" style="right:35px;top:588px">40.1% U</div>
<div class="abs" style="left:1px;top:619px;width:996px;height:1px;background:#ebeadf"></div>
<div class="cr lnk" style="letter-spacing:0.95px;left:13px;top:604px">3155</div>
<div class="cr" style="letter-spacing:0.45px;left:74px;top:604px">Special Convocation</div>
<div class="cr num" style="right:646px;top:604px">0</div>
<div class="cr num" style="right:543px;top:604px">0</div>
<div class="cr num" style="right:440px;top:604px">0</div>
<div class="cr num" style="right:337px;top:604px">0</div>
<div class="cr num" style="right:234px;top:604px">0</div>
<div class="cr num" style="right:131px;top:604px">0</div>
<div class="abs" style="left:1px;top:635px;width:996px;height:1px;background:#ebeadf"></div>
<div class="cr lnk" style="letter-spacing:0.95px;left:13px;top:620px">3160</div>
<div class="cr" style="letter-spacing:0.45px;left:74px;top:620px">Student Recruitment</div>
<div class="cr num" style="right:646px;top:620px">0</div>
<div class="cr num" style="right:543px;top:620px">-2</div>
<div class="cr num" style="right:440px;top:620px">0</div>
<div class="cr num" style="right:337px;top:620px">0</div>
<div class="cr num" style="right:234px;top:620px">0</div>
<div class="cr num" style="right:131px;top:620px">0</div>
<div class="abs" style="left:69px;top:220px;width:1px;height:441px;background:#e8e6da"></div>
<div class="abs" style="left:247px;top:220px;width:1px;height:441px;background:#e8e6da"></div>
<div class="abs" style="left:350px;top:220px;width:1px;height:441px;background:#e8e6da"></div>
<div class="abs" style="left:453px;top:220px;width:1px;height:441px;background:#e8e6da"></div>
<div class="abs" style="left:556px;top:220px;width:1px;height:441px;background:#e8e6da"></div>
<div class="abs" style="left:659px;top:220px;width:1px;height:441px;background:#e8e6da"></div>
<div class="abs" style="left:762px;top:220px;width:1px;height:441px;background:#e8e6da"></div>
<div class="abs" style="left:865px;top:220px;width:1px;height:441px;background:#e8e6da"></div>
<div class="abs" style="left:963px;top:202px;width:34px;height:459px;background:#dde5e8"></div>
</div>
<svg class="abs" style="left:0;top:0" width="997" height="661"><polyline points="974.5,0.0 972.8,1.5 971.2,2.9 968.9,3.4 967.2,4.8 970.3,7.3 972.0,9.2 972.2,11.7 973.3,13.9 975.0,15.0 972.7,16.2 970.5,17.7 967.8,18.0 966.0,19.3 964.7,21.4 962.5,22.2 961.1,24.1 958.8,24.8 958.9,27.7 957.6,30.3 959.3,31.8 960.4,33.9 962.4,35.0 963.0,37.5 965.1,37.8 966.9,38.8 968.4,40.3 970.3,41.0 970.8,43.8 972.7,46.0 970.5,46.8 968.5,48.0 966.0,47.9 964.2,49.6 963.7,51.7 961.3,52.5 960.6,54.5 961.3,56.9 961.2,59.3 963.7,60.7 965.4,63.0 967.4,63.6 968.9,65.1 970.3,66.6 970.0,69.1 970.9,71.4 972.8,72.8 973.9,75.0 972.2,76.6 970.5,78.2 969.0,80.0 967.6,81.5 965.9,82.6 964.9,84.6 963.3,85.9 961.6,87.0 959.5,87.7 958.3,89.3 956.9,90.8 955.0,91.7 953.6,93.2 952.0,94.5 953.2,96.2 953.4,98.4 954.5,100.1 955.7,101.8 955.8,103.9 954.8,105.8 954.5,107.8 953.4,109.7 953.3,111.8 953.3,113.9 954.8,115.4 955.0,117.8 957.5,118.6 958.3,120.6 959.4,122.4 961.2,124.0 963.7,124.3 965.4,126.0 964.6,128.0 964.6,130.3 963.0,132.0 961.5,133.5 960.2,135.1 959.3,136.9 957.6,138.3 957.2,140.6 955.4,141.8 954.4,143.6 953.3,145.4 955.6,147.3 958.0,149.0 960.0,150.1 961.5,151.9 963.4,153.3 965.7,153.8 967.5,155.3 970.0,155.6 971.5,157.5 969.3,158.0 967.3,158.9 965.4,160.0 964.3,161.9 964.4,163.9 965.2,166.0 964.8,168.0 964.1,170.0 964.2,172.0 962.9,173.9 960.6,174.5 959.1,176.2 957.0,176.9 957.0,179.3 956.5,181.5 954.7,183.3 955.2,185.8 954.4,187.9 953.3,190.0 955.5,190.8 957.3,192.5 960.0,192.2 961.8,193.8 961.7,195.8 961.3,197.9 960.5,199.8 960.4,201.9 960.1,203.9 960.6,206.0 959.4,207.8 957.7,209.1 956.2,210.7 954.5,212.0 953.5,214.0 953.1,216.1 954.2,218.4 953.3,220.4 955.0,221.6 956.1,223.3 957.3,224.9 958.2,226.8 959.3,228.5 960.6,230.0 961.3,231.9 962.0,233.9 961.5,236.0 961.8,238.0 961.8,240.0 960.3,241.5 958.4,242.7 957.3,244.6 956.1,246.4 954.6,247.9 953.3,249.7 953.2,251.7 954.5,253.7 953.2,255.8 953.6,257.8 953.6,259.8 954.5,261.8 955.6,263.8 957.6,265.1 959.0,266.8 960.9,268.1 961.8,270.3 962.3,272.4 963.9,274.2 964.6,276.3 965.0,278.4 965.8,280.5 966.2,282.6 966.6,284.8 965.8,287.1 964.5,289.0 962.9,290.6 961.6,292.5 959.8,294.0 958.2,295.7 960.5,296.4 961.4,299.1 963.5,300.1 965.8,300.9 967.5,302.4 969.0,304.2 968.4,306.4 967.4,308.5 966.9,310.8 965.4,312.6 965.4,315.0 965.7,317.3 967.3,319.3 967.8,321.5 969.1,323.6 969.0,326.0 970.8,327.2 971.7,329.0 973.0,330.5 973.4,332.8 975.6,333.6 976.3,335.6 975.0,337.7 972.2,337.8 970.8,339.8 969.4,341.7 967.2,342.5 965.4,344.0 964.2,346.1 961.9,346.8 959.7,347.5 958.1,349.1 956.5,350.7 955.3,352.7 953.3,353.8 953.2,356.3 953.3,358.7 951.9,361.0 952.1,363.5 953.9,364.5 955.6,365.9 957.9,366.2 959.8,367.0 961.2,369.0 962.9,370.2 964.9,371.0 966.8,371.9 968.7,372.9 970.6,373.8 972.7,374.4 971.6,376.2 969.8,377.2 968.6,378.8 967.6,380.7 966.2,382.1 964.2,382.9 963.6,385.1 962.6,387.1 960.9,388.8 959.5,390.6 959.3,393.0 958.2,395.0 956.8,397.3 957.0,400.0 958.0,402.2 959.6,403.8 961.8,404.8 961.4,407.3 961.1,409.8 960.5,412.2 959.4,414.5 960.5,416.8 961.1,419.2 961.0,421.8 961.8,424.2 962.6,426.2 964.1,427.7 966.0,428.8 967.1,430.6 968.3,432.3 970.7,433.0 971.5,435.1 969.8,436.6 968.0,438.0 966.7,439.9 965.3,441.6 964.2,443.6 963.4,445.6 963.1,447.8 961.3,449.5 961.3,451.8 959.7,453.5 959.4,455.7 958.7,457.8 959.9,459.8 960.1,461.9 959.3,464.1 959.9,466.1 961.0,468.1 960.6,470.2 961.5,472.3 961.7,474.5 960.6,476.8 961.0,479.0 961.8,481.1 964.2,481.1 966.1,482.9 968.2,483.7 970.6,483.8 973.0,483.8 975.1,484.7 973.5,486.2 972.5,488.3 971.0,490.0 968.3,490.3 967.1,492.3 965.7,494.0 964.2,495.6 962.6,497.4 962.5,499.9 960.9,501.7 960.6,504.1 959.5,505.9 960.1,508.1 959.6,510.0 959.0,512.0 958.6,513.9 957.5,515.7 957.6,517.8 956.8,519.7 956.8,521.7 955.7,523.5 956.7,525.8 959.0,527.0 960.3,528.9 961.8,530.8 963.9,531.9 965.9,533.4 968.4,533.5 970.2,535.3 972.7,535.6 970.9,536.8 969.0,538.0 967.2,539.2 965.9,541.2 963.7,541.8 961.8,542.9 961.3,545.2 960.6,547.3 958.3,548.7 958.3,551.2 956.8,553.0 955.7,555.0 955.6,554.6 954.7,556.0 957.4,556.7 955.3,558.1 953.8,560.1 954.6,562.9 955.6,565.6 957.9,566.6 959.9,568.1 962.0,569.3 963.3,571.0 964.3,573.0 966.6,573.9 967.4,576.0 969.2,577.3 970.2,579.3 972.6,580.5 974.2,582.8 976.6,583.9 974.7,584.9 972.7,585.9 970.6,586.6 968.5,587.4 966.9,589.2 964.8,590.0 963.0,591.2 961.6,593.2 960.2,595.3 958.5,597.2 957.4,599.4 956.4,601.3 955.2,603.0 954.2,604.9 952.4,606.4 952.0,608.6 951.1,610.8 951.0,613.1 950.1,615.2 949.8,617.4 950.9,619.7 950.2,621.9 950.1,624.1 947.5,622.9 944.6,623.2 942.6,622.4 940.5,623.5 938.5,623.3 936.5,622.6 934.4,623.0 932.5,622.1 930.8,623.8 928.9,625.4 926.5,626.1 924.5,625.8 922.5,625.6 920.5,625.4 918.5,626.7 916.5,625.7 914.5,626.1 912.6,625.1 910.3,625.2 908.7,623.2 906.5,623.1 904.4,622.5 902.5,624.1 900.4,623.0 898.5,624.3 896.4,624.4 894.3,623.7 892.3,624.3 890.4,625.1 888.5,626.1 886.4,626.0 884.4,626.2 882.5,626.9 880.5,627.5 878.5,627.7 876.3,627.3 874.4,628.1 872.1,628.3 870.4,626.7 868.4,626.1 866.7,624.8 864.6,624.0 863.3,622.1 862.1,620.3 860.3,619.1 858.3,619.1 856.3,619.9 854.3,618.2 852.3,618.6 850.3,618.3 848.3,619.1 846.4,620.0 844.3,619.9 842.4,620.6 840.2,619.5 838.3,620.6 836.3,621.0 834.3,620.7 832.2,620.1 830.2,620.5 828.3,621.7 826.3,622.1 824.1,620.9 822.2,621.8 820.2,622.1 818.1,622.1 816.3,623.6 814.3,624.0 812.1,623.2 810.2,624.1 808.3,625.0 806.0,623.9 804.1,624.8 802.0,624.8 800.2,626.5 798.1,626.1 796.4,627.3 796.3,629.8 794.0,630.5 793.4,632.5 792.1,634.1 790.1,634.4 788.1,634.1 786.0,633.5 784.1,634.7 782.1,635.0 780.0,634.3 778.0,634.9 776.0,635.2 774.0,634.5 771.5,634.9 769.0,634.1 766.9,633.2 765.6,631.5 764.3,629.8 762.8,628.3 761.8,626.3 760.0,625.1 758.0,625.3 756.0,624.7 753.9,625.1 752.0,624.6 750.0,624.1 747.8,625.0 745.5,624.7 743.2,625.2 740.9,624.0 738.6,624.5 737.0,625.9 736.0,627.8 734.1,628.9 732.0,629.7 731.5,632.3 729.1,632.8 728.1,634.7 726.5,636.1 724.5,635.4 722.7,634.2 720.5,634.1 719.0,632.6 717.8,630.9 716.8,629.1 715.8,627.1 713.6,626.3 712.5,624.5 710.4,624.1 708.4,624.5 706.4,624.8 704.5,625.4 702.5,625.6 700.5,626.3 698.4,625.7 696.5,626.6 694.5,627.0 692.3,626.0 690.5,627.1 688.5,627.6 686.5,627.9 684.3,626.8 682.4,627.7 681.2,625.9 679.4,624.8 677.4,624.0 675.7,622.8 674.4,621.1 672.1,619.4 670.4,617.1 668.4,618.7 666.3,620.1 664.3,620.7 662.3,620.3 660.3,620.6 658.3,619.4 656.3,619.4 654.3,620.2 652.3,620.8 650.3,619.5 648.3,620.7 646.3,620.7 644.3,621.4 642.3,620.5 640.2,619.1 638.3,617.3 636.3,615.7 634.3,615.7 632.2,616.2 630.2,615.7 628.2,616.2 626.4,617.5 624.3,617.6 622.4,618.4 620.2,618.3 618.4,619.4 616.2,619.1 614.0,619.4 612.1,618.4 610.1,618.1 608.2,617.1 606.1,617.0 604.0,617.2 601.8,616.9 599.7,617.2 597.6,617.2 595.5,617.0 593.4,618.0 591.3,618.2 589.2,617.1 587.1,618.1 586.4,620.5 584.3,622.1 583.1,624.3 582.1,626.5 579.8,626.6 578.1,625.1 576.1,624.4 574.1,624.2 572.1,624.5 570.1,624.2 568.1,624.5 566.1,625.4 565.1,627.7 563.0,628.5 561.4,629.8 559.3,630.7 558.0,632.5 556.2,631.4 554.2,630.7 552.0,630.6 550.0,630.1 548.5,628.2 546.4,627.3 544.6,626.0 542.2,625.4 540.6,623.7 538.6,624.5 536.6,624.4 534.5,624.0 532.5,624.4 530.5,623.1 528.5,623.7 527.1,625.2 525.7,626.7 524.3,628.3 522.9,629.8 521.8,631.5 520.5,633.1 518.8,634.6 516.3,633.9 514.5,635.1 512.5,634.5 510.5,634.8 508.5,634.6 506.5,634.5 504.9,633.0 502.5,632.5 501.5,630.3 499.2,629.7 497.2,628.6 495.7,627.0 494.4,625.1 492.4,624.1 490.3,624.4 488.4,623.7 486.2,624.6 483.9,625.5 482.4,627.5 480.5,629.0 478.4,630.1 476.4,630.5 474.3,630.5 472.3,630.7 470.3,631.3 468.3,631.6 466.4,632.9 464.3,632.5 462.3,633.1 460.3,632.8 458.3,631.9 456.3,632.7 454.3,632.1 452.3,633.1 450.3,632.9 448.3,632.1 446.6,630.3 445.9,627.9 444.3,626.1 442.5,624.8 440.3,624.1 438.7,625.6 437.9,627.7 436.3,629.1 434.3,630.4 432.3,631.8 430.2,633.1 428.6,631.4 426.5,630.1 425.9,627.5 423.4,626.6 422.2,624.5 420.1,623.8 418.1,624.0 416.3,625.8 414.2,625.2 412.2,624.7 410.1,624.6 408.2,625.6 406.2,625.7 404.0,625.3 402.0,624.6 400.4,622.6 398.1,622.5 396.1,623.0 394.1,622.2 392.1,622.9 390.1,622.2 388.1,621.4 386.1,622.1 384.4,623.6 381.9,623.4 380.1,624.8 378.1,625.7 376.1,624.8 374.1,625.0 372.0,625.7 370.1,624.3 368.0,624.9 365.9,625.5 364.0,624.5 361.9,625.2 360.0,624.1 358.0,624.0 356.0,624.1 353.9,624.1 352.0,623.6 350.0,623.1 347.6,623.9 345.0,623.4 342.6,624.5 340.4,624.9 338.7,623.1 336.7,622.5 334.4,623.3 332.7,621.4 330.5,621.7 329.0,620.2 327.5,618.8 325.1,618.6 323.5,617.3 321.8,616.1 320.7,614.1 318.5,613.7 316.5,614.0 314.6,614.9 312.5,615.3 310.5,615.7 309.3,617.4 308.0,619.1 306.5,620.5 304.0,621.0 303.2,623.1 300.9,623.7 300.2,626.0 298.4,627.1 296.4,627.3 294.4,626.7 292.3,627.1 290.4,626.5 288.4,626.1 287.9,623.8 286.6,622.1 285.3,620.4 283.8,618.8 282.4,617.1 280.5,616.2 278.5,616.0 276.4,616.5 274.4,616.0 272.3,617.1 270.4,616.1 268.2,616.1 266.1,617.0 263.8,616.9 261.7,617.6 259.7,618.6 257.6,619.5 255.3,619.1 253.4,620.4 253.3,623.0 251.6,624.4 250.3,626.1 248.3,626.4 246.3,626.4 244.3,625.6 242.3,625.1 240.3,626.4 238.3,625.6 236.2,626.3 234.2,625.8 232.2,626.0 230.2,626.4 228.2,626.4 226.2,626.3 224.2,625.0 222.2,625.7 220.2,624.6 218.0,624.0 216.2,622.5 214.2,621.7 212.2,621.5 210.2,622.4 208.2,622.9 206.2,622.8 204.2,622.9 202.2,622.4 200.2,622.1 199.5,624.1 198.0,625.5 196.7,627.0 194.9,628.2 193.2,629.4 192.1,631.1 191.3,633.1 190.0,634.6 188.6,636.1 186.6,636.0 184.5,636.1 182.5,636.1 180.5,635.7 178.4,634.8 177.0,633.0 176.3,630.5 173.6,630.1 172.5,628.1 170.5,627.8 168.5,627.4 166.6,626.7 164.5,627.1 162.6,627.9 160.6,628.0 158.6,628.3 156.5,628.1 154.5,628.9 152.5,629.4 150.2,629.1 148.2,629.9 146.4,631.1 144.0,632.1 142.9,634.8 140.4,635.7 138.3,636.4 136.4,635.1 134.4,634.6 132.4,635.3 130.4,635.1 129.5,633.0 127.6,631.5 127.2,629.2 127.1,626.8 125.9,624.8 125.0,622.8 124.2,620.7 122.4,619.1 119.4,617.1 118.2,618.9 116.9,620.6 115.3,622.0 113.3,623.1 111.6,624.4 110.3,626.1 107.9,625.7 105.7,626.5 103.5,627.0 101.3,627.7 99.9,625.7 97.7,624.5 96.1,622.7 94.3,621.1 91.9,620.8 90.5,618.6 88.3,618.1 86.5,619.8 83.9,620.0 82.1,621.7 80.4,623.5 78.2,624.5 76.3,625.5 74.3,625.5 72.2,625.2 70.2,625.7 68.0,626.5 66.5,628.6 64.2,629.1 62.0,628.3 60.8,626.2 59.2,624.7 57.2,623.5 55.3,622.3 54.0,620.4 52.2,619.1 49.6,618.3 48.1,616.1 46.2,616.9 44.1,617.1 41.8,616.8 39.7,615.6 37.4,615.8 35.1,615.7 32.7,615.6 30.6,616.9 28.5,618.0 26.1,618.1 24.0,617.9 22.4,616.0 20.1,616.1 18.1,615.7 16.1,616.3 14.0,616.8 12.0,615.8 10.0,615.5 8.0,615.7 6.0,615.9 4.0,616.3 2.0,615.7 0.0,616.1" fill="none" stroke="#1e1e1e" stroke-width="1"/></svg>
<svg class="abs callout" style="left:0;top:0" width="997" height="661">
<defs><filter id="csh" x="-20%" y="-20%" width="140%" height="140%"><feGaussianBlur stdDeviation="1.3"/></filter></defs>
<g transform="translate(-1.5,3)" opacity="0.42" filter="url(#csh)" fill="#333" stroke="#333" stroke-width="6" stroke-miterlimit="30">
<path d="M696,140 H773 A44,44 0 0 1 817,184 V203 A44,44 0 0 1 773,247 H696 A44,44 0 0 1 652,203 V184 A44,44 0 0 1 696,140 Z"/><path d="M599.3,95.7 L700,161.5 L665.4,185 Z"/><path d="M186,357 H287 A48,48 0 0 1 335,405 V416 A48,48 0 0 1 287,464 H186 A48,48 0 0 1 138,416 V405 A48,48 0 0 1 186,357 Z"/><path d="M62.7,314.8 L175,372.6 L162,420 Z"/><path d="M585.3,83.9 L700,165 L660,190 Z M46.5,307 L175,380 L160,419.4 Z" stroke="none"/></g>
<path d="M585.3,83.9 L700,165 L660,190 Z M46.5,307 L175,380 L160,419.4 Z" fill="#fff"/><g fill="#fff" stroke="#fff" stroke-width="6" stroke-miterlimit="30"><path d="M696,140 H773 A44,44 0 0 1 817,184 V203 A44,44 0 0 1 773,247 H696 A44,44 0 0 1 652,203 V184 A44,44 0 0 1 696,140 Z"/><path d="M599.3,95.7 L700,161.5 L665.4,185 Z"/><path d="M186,357 H287 A48,48 0 0 1 335,405 V416 A48,48 0 0 1 287,464 H186 A48,48 0 0 1 138,416 V405 A48,48 0 0 1 186,357 Z"/><path d="M62.7,314.8 L175,372.6 L162,420 Z"/></g>
<g fill="#02ad8e"><path d="M696,140 H773 A44,44 0 0 1 817,184 V203 A44,44 0 0 1 773,247 H696 A44,44 0 0 1 652,203 V184 A44,44 0 0 1 696,140 Z"/><path d="M599.3,95.7 L700,161.5 L665.4,185 Z"/><path d="M186,357 H287 A48,48 0 0 1 335,405 V416 A48,48 0 0 1 287,464 H186 A48,48 0 0 1 138,416 V405 A48,48 0 0 1 186,357 Z"/><path d="M62.7,314.8 L175,372.6 L162,420 Z"/></g>
<g fill="#fff" font-size="18.7" letter-spacing="0.25" text-anchor="middle">
<text x="733" y="178">Adjust the</text>
<text x="733" y="199.5">"Sum By"</text>
<text x="733" y="221.5">sequence</text>
<text x="235.5" y="394.5">Click on any</text>
<text x="235.5" y="416">code to view</text>
<text x="235.5" y="438">the Acct Detail</text>
</g></svg>
</body></html>
